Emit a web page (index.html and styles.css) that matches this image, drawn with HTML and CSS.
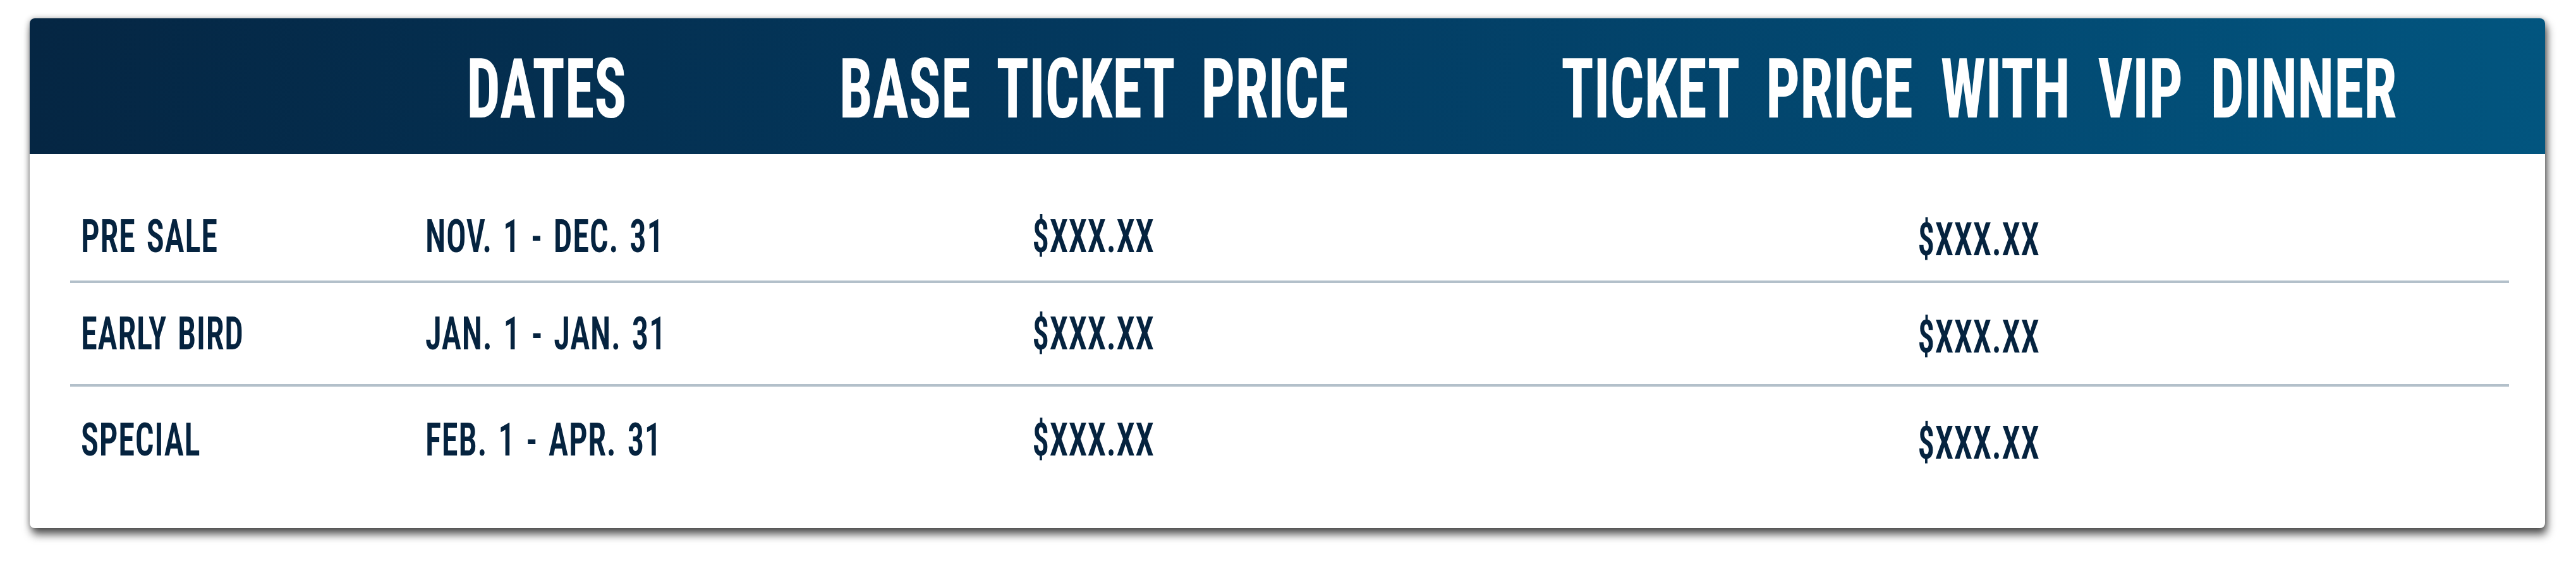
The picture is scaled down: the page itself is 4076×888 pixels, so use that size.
FILE: index.html
```html
<!DOCTYPE html>
<html lang="en">
<head>
<meta charset="utf-8">
<title>Ticket Prices</title>
<link rel="stylesheet" href="styles.css">
</head>
<body>
<div class="page">
  <section class="card">
    <div class="head grid">
      <div class="hcell"></div>
      <div class="hcell"><span class="htxt">DATES</span></div>
      <div class="hcell"><span class="htxt">BASE TICKET PRICE</span></div>
      <div class="hcell"><span class="htxt">TICKET PRICE WITH VIP DINNER</span></div>
      <div class="hcell"></div>
    </div>
    <div class="rows">
      <div class="row grid">
        <div class="cell left"><span class="txt">PRE SALE</span></div>
        <div class="cell left"><span class="txt">NOV. 1 - DEC. 31</span></div>
        <div class="cell center"><span class="txt">$XXX.XX</span></div>
        <div class="cell center vip"><span class="txt">$XXX.XX</span></div>
        <div class="cell"></div>
      </div>
      <div class="row grid">
        <div class="cell left"><span class="txt">EARLY BIRD</span></div>
        <div class="cell left"><span class="txt">JAN. 1 - JAN. 31</span></div>
        <div class="cell center"><span class="txt">$XXX.XX</span></div>
        <div class="cell center vip"><span class="txt">$XXX.XX</span></div>
        <div class="cell"></div>
      </div>
      <div class="row grid">
        <div class="cell left"><span class="txt">SPECIAL</span></div>
        <div class="cell left"><span class="txt">FEB. 1 - APR. 31</span></div>
        <div class="cell center"><span class="txt">$XXX.XX</span></div>
        <div class="cell center vip"><span class="txt">$XXX.XX</span></div>
        <div class="cell"></div>
      </div>
    </div>
  </section>
</div>
</body>
</html>
```
FILE: styles.css
```css
html, body {
  margin: 0;
  padding: 0;
  background: #ffffff;
}
.page {
  padding: 29px 49px 40px 47px;
}
.card {
  height: 807px;
  background: #ffffff;
  border-radius: 8px;
  overflow: hidden;
  box-shadow: 0 0 10px rgba(0, 0, 0, 0.3), 3px 10px 14px rgba(0, 0, 0, 0.65);
  font-family: "Roboto", "Liberation Sans", sans-serif;
  font-stretch: 75%;
}
.grid {
  display: grid;
  grid-template-columns: 545px 418px 1312px 1490px 1fr;
}
.head {
  height: 215px;
  box-sizing: border-box;
  padding: 8px 57px 0 64px;
  align-items: center;
  background: linear-gradient(90deg, #052643 0%, #033a60 45%, #02557f 100%);
}
.hcell {
  display: flex;
  justify-content: center;
}
.htxt {
  display: inline-block;
  color: #ffffff;
  font-size: 132px;
  line-height: 1;
  font-weight: 700;
  word-spacing: 30px;
  white-space: nowrap;
  transform: scaleX(0.72);
  transform-origin: center;
}
.rows {
  padding: 50px 57px 0 64px;
}
.row {
  padding: 44px 0 43px;
  border-bottom: 4px solid #b3c0ca;
  align-items: start;
}
.row:first-child {
  padding-bottom: 33px;
}
.row:last-child {
  padding-top: 48px;
  border-bottom: none;
}
.cell {
  display: flex;
}
.cell.left {
  padding-left: 17px;
}
.cell.center {
  justify-content: center;
}
.txt {
  display: inline-block;
  color: #05233f;
  font-size: 73px;
  line-height: 1;
  font-weight: 600;
  letter-spacing: 1px;
  word-spacing: 6px;
  white-space: nowrap;
  transform: scaleX(0.72);
  transform-origin: left;
}
.center .txt {
  transform-origin: center;
}
.vip .txt {
  margin: 5px 0 -5px;
}
```
